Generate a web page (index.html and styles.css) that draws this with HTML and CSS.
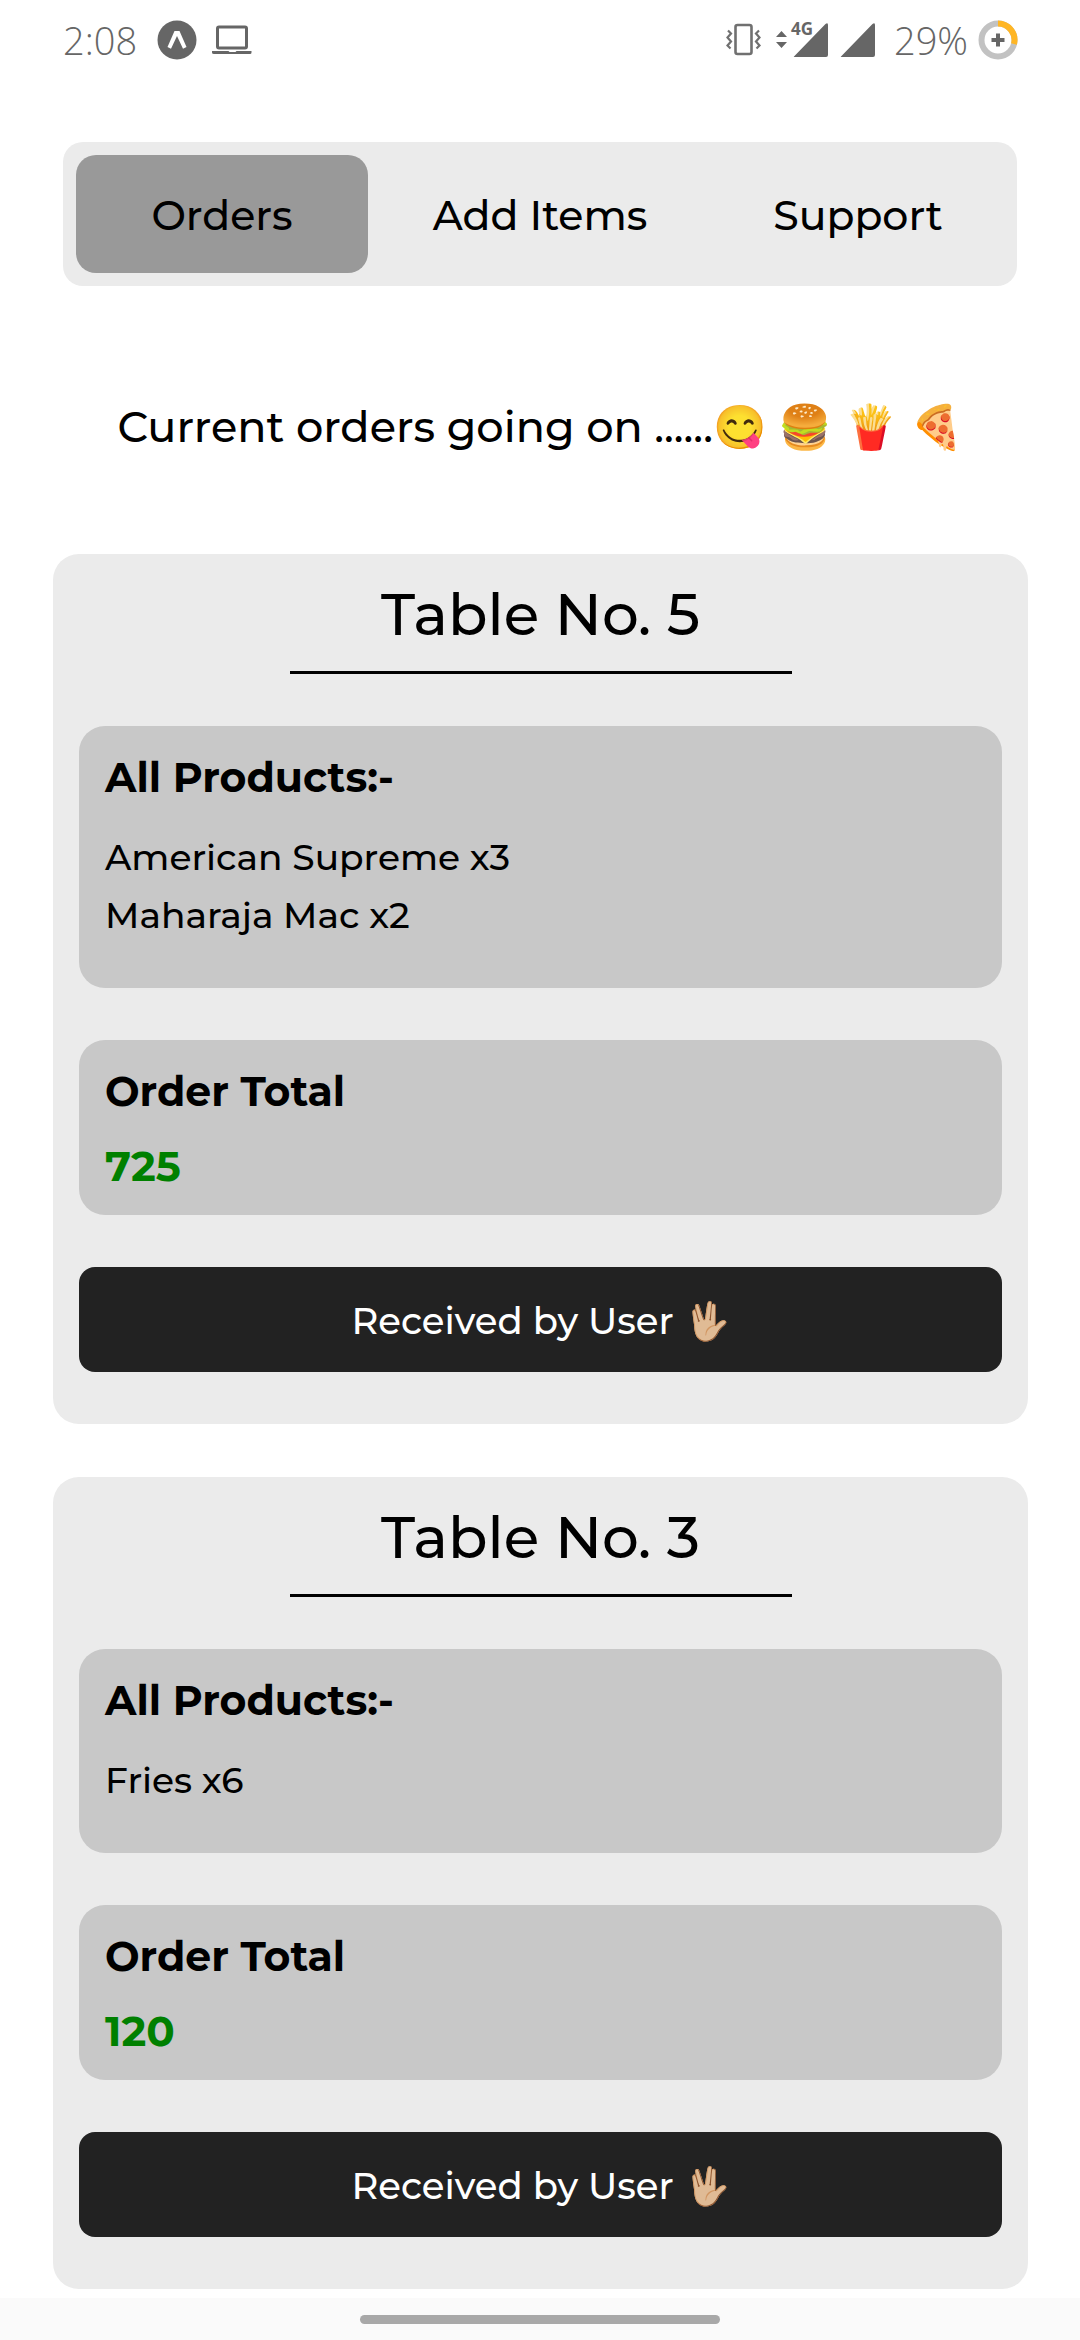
FILE: index.html
```html
<!DOCTYPE html>
<html lang="en">
<head>
<meta charset="utf-8">
<meta name="viewport" content="width=device-width, initial-scale=1">
<title>Orders</title>
<link rel="stylesheet" href="styles.css">
</head>
<body>
<header class="status">
  <div class="status-group">
    <span class="clock">2:08</span>
    <svg class="icon-app" width="40" height="40" viewBox="0 0 40 40" aria-hidden="true"><circle cx="20" cy="20" r="19.5" fill="#666"/><path d="M17.500 11h5l7 16-3.500 1.800L20 16l-6 12.800-3.500-1.800z" fill="#fff"/></svg>
    <svg class="icon-laptop" width="40" height="30" viewBox="0 0 40 30" aria-hidden="true"><rect x="5.500" y="2" width="29" height="21" rx="1.500" fill="none" stroke="#666" stroke-width="3"/><path d="M0 26h16.500l1 1h6l1-1H39.500v1.500q0 1.500-1.500 1.500H2q-2 0-2-1.500z" fill="#666"/></svg>
  </div>
  <div class="status-group">
    <svg class="icon-vibrate" width="36" height="34" viewBox="0 0 36 34" fill="none" stroke="#707070" aria-hidden="true"><rect x="9.500" y="2" width="16" height="29" rx="2" stroke-width="2.600"/><path d="M2 7.500l3 3-3.500 4 3.500 4-3.500 4 3 3M33 7.500l-3 3 3.500 4-3.500 4 3.500 4-3 3" stroke-width="2.200"/></svg>
    <svg class="icon-data" width="54" height="52" viewBox="0 -8 54 52" fill="#666" aria-hidden="true"><path d="M1 15l5.500-6 5.500 6zM1 20l5.500 6 5.500-6z"/><path d="M19 34.500L50.500 2Q53 0 53 3v30q0 2-2 2H20q-2 0-1-.5z"/><text class="net" x="16" y="13">4G</text></svg>
    <svg class="icon-signal" width="36" height="36" viewBox="0 0 36 36" fill="#666" aria-hidden="true"><path d="M1 34.500L32.500 2Q35 0 35 3v30q0 2-2 2H2q-2 0-1-.5z"/></svg>
    <span class="clock">29%</span>
    <svg class="icon-battery" width="40" height="40" viewBox="0 0 40 40" fill="none" aria-hidden="true"><circle cx="20" cy="20" r="16.500" stroke="#c2c2c2" stroke-width="6"/><path d="M20 3.500A16.500 16.500 0 0 1 36 24" stroke="#ffb624" stroke-width="6"/><path d="M20 13.500v13M13.500 20h13" stroke="#666" stroke-width="4"/></svg>
  </div>
</header>
<nav class="tabs">
  <button class="tab tab-active" type="button">Orders</button>
  <button class="tab" type="button">Add Items</button>
  <button class="tab" type="button">Support</button>
</nav>
<main class="page">
  <p class="intro">Current orders going on ......😋 🍔 🍟 🍕</p>
  <section class="card">
    <h2 class="card-title">Table No. 5</h2>
    <div class="box">
      <h3 class="box-title">All Products:-</h3>
      <ul class="products"><li>American Supreme x3</li><li>Maharaja Mac x2</li></ul>
    </div>
    <div class="box">
      <h3 class="box-title">Order Total</h3>
      <p class="total">725</p>
    </div>
    <button class="received" type="button">Received by User 🖖🏼</button>
  </section>
  <section class="card">
    <h2 class="card-title">Table No. 3</h2>
    <div class="box">
      <h3 class="box-title">All Products:-</h3>
      <ul class="products"><li>Fries x6</li></ul>
    </div>
    <div class="box">
      <h3 class="box-title">Order Total</h3>
      <p class="total">120</p>
    </div>
    <button class="received" type="button">Received by User 🖖🏼</button>
  </section>
</main>
<footer class="gesture"><div class="pill"></div></footer>
</body>
</html>
```
FILE: styles.css
```css
* { box-sizing: border-box; margin: 0; padding: 0; }
body {
  min-height: 100vh;
  display: flex;
  flex-direction: column;
  background: #fff;
  color: #000;
  font-family: Gotham, Montserrat, Inter, sans-serif;
  font-weight: 500;
}
button { border: 0; background: none; color: inherit; font: inherit; cursor: pointer; }
.status { display: flex; justify-content: space-between; align-items: center; height: 80px; padding: 0 62px 0 63px; }
.status-group { display: flex; align-items: center; }
.clock { color: #666; font: 300 38px/56px "Open Sans", sans-serif; }
.icon-app { margin-left: 20px; }
.icon-laptop { margin-left: 15px; }
.icon-data { margin-left: 13px; }
.icon-signal { margin: 0 18px 0 11px; }
.icon-battery { margin-left: 10px; }
.net { font: 700 17px "Open Sans", sans-serif; }
.tabs { display: grid; grid-template-columns: repeat(3, 1fr); gap: 26px; margin: 62px 63px 0; padding: 13px; border-radius: 20px; background: #ebebeb; }
.tab { padding: 35px 0 33px; border-radius: 20px; font-size: 41px; line-height: 50px; }
.tab-active { background: #999; }
.page { flex: 1; display: flex; flex-direction: column; gap: 53px; padding: 0 52px 9px 53px; }
.intro { padding: 116px 0 49px; font-size: 43px; line-height: 50px; text-align: center; }
.card { display: flex; flex-direction: column; gap: 52px; padding: 26px 26px 52px; border-radius: 26px; background: #ebebeb; }
.card-title { align-self: center; width: 502px; max-width: 100%; padding: 0 0 21px; border-bottom: 3px solid #000; font-size: 58px; font-weight: 500; line-height: 70px; text-align: center; }
.box { padding: 26px; border-radius: 26px; background: #c8c8c8; }
.box-title { font-size: 41px; font-weight: 700; line-height: 50px; }
.products { padding: 26px 0 18px; list-style: none; font-size: 36px; line-height: 58px; }
.total { padding-top: 25px; margin-bottom: -2px; color: #008000; font-size: 42px; font-weight: 700; line-height: 50px; }
.received { padding: 28px 0 26px; border-radius: 16px; background: #222; color: #fff; font-size: 37px; line-height: 51px; }
.gesture { display: flex; justify-content: center; padding: 17px 0 16px; background: #fafafa; }
.pill { width: 360px; height: 9px; border-radius: 5px; background: #a8a8a8; }
```
